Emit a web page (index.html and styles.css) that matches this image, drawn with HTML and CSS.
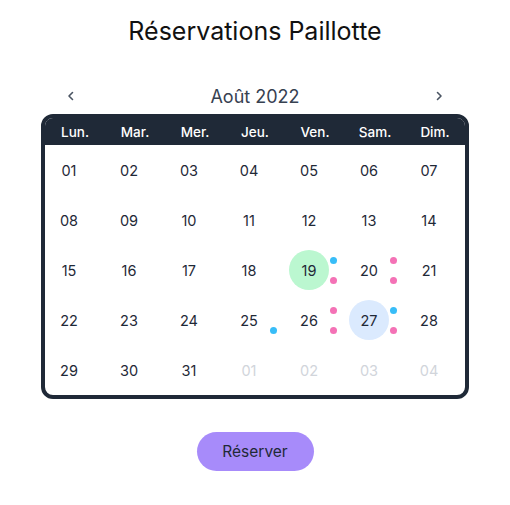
FILE: index.html
```html
<!DOCTYPE html>
<html lang="fr">
<head>
    <meta charset="UTF-8" />
    <meta name="viewport" content="width=device-width, initial-scale=1.0" />
    <title>Réservations Paillotte</title>
    <link rel="stylesheet" href="styles.css">
</head>
<body>
    <h1>Réservations Paillotte</h1>

    <div class="calendar-wrap">
        <div class="month-nav">
            <button class="nav-btn" aria-label="Mois précédent">
                <svg width="10" height="10" viewBox="0 0 10 10"><path d="M6.5 1.5 L3 5 L6.5 8.5" fill="none" stroke="#4b5563" stroke-width="1.6" stroke-linecap="round" stroke-linejoin="round"/></svg>
            </button>
            <span class="month-label">Août 2022</span>
            <button class="nav-btn" aria-label="Mois suivant">
                <svg width="10" height="10" viewBox="0 0 10 10"><path d="M3.5 1.5 L7 5 L3.5 8.5" fill="none" stroke="#4b5563" stroke-width="1.6" stroke-linecap="round" stroke-linejoin="round"/></svg>
            </button>
        </div>

        <div class="calendar">
            <div class="weekdays">
                <span>Lun.</span><span>Mar.</span><span>Mer.</span><span>Jeu.</span><span>Ven.</span><span>Sam.</span><span>Dim.</span>
            </div>
            <div class="days">
                <div class="day"><span class="num">01</span><span class="dots"></span></div>
                <div class="day"><span class="num">02</span><span class="dots"></span></div>
                <div class="day"><span class="num">03</span><span class="dots"></span></div>
                <div class="day"><span class="num">04</span><span class="dots"></span></div>
                <div class="day"><span class="num">05</span><span class="dots"></span></div>
                <div class="day"><span class="num">06</span><span class="dots"></span></div>
                <div class="day"><span class="num">07</span><span class="dots"></span></div>

                <div class="day"><span class="num">08</span><span class="dots"></span></div>
                <div class="day"><span class="num">09</span><span class="dots"></span></div>
                <div class="day"><span class="num">10</span><span class="dots"></span></div>
                <div class="day"><span class="num">11</span><span class="dots"></span></div>
                <div class="day"><span class="num">12</span><span class="dots"></span></div>
                <div class="day"><span class="num">13</span><span class="dots"></span></div>
                <div class="day"><span class="num">14</span><span class="dots"></span></div>

                <div class="day"><span class="num">15</span><span class="dots"></span></div>
                <div class="day"><span class="num">16</span><span class="dots"></span></div>
                <div class="day"><span class="num">17</span><span class="dots"></span></div>
                <div class="day"><span class="num">18</span><span class="dots"></span></div>
                <div class="day"><span class="num today">19</span><span class="dots"><i class="dot blue"></i><i class="dot pink"></i></span></div>
                <div class="day"><span class="num">20</span><span class="dots"><i class="dot pink"></i><i class="dot pink"></i></span></div>
                <div class="day"><span class="num">21</span><span class="dots"></span></div>

                <div class="day"><span class="num">22</span><span class="dots"></span></div>
                <div class="day"><span class="num">23</span><span class="dots"></span></div>
                <div class="day"><span class="num">24</span><span class="dots"></span></div>
                <div class="day"><span class="num">25</span><span class="dots"><i class="dot empty"></i><i class="dot blue"></i></span></div>
                <div class="day"><span class="num">26</span><span class="dots"><i class="dot pink"></i><i class="dot pink"></i></span></div>
                <div class="day"><span class="num selected">27</span><span class="dots"><i class="dot blue"></i><i class="dot pink"></i></span></div>
                <div class="day"><span class="num">28</span><span class="dots"></span></div>

                <div class="day"><span class="num">29</span><span class="dots"></span></div>
                <div class="day"><span class="num">30</span><span class="dots"></span></div>
                <div class="day"><span class="num">31</span><span class="dots"></span></div>
                <div class="day other"><span class="num">01</span><span class="dots"></span></div>
                <div class="day other"><span class="num">02</span><span class="dots"></span></div>
                <div class="day other"><span class="num">03</span><span class="dots"></span></div>
                <div class="day other"><span class="num">04</span><span class="dots"></span></div>
            </div>
        </div>
    </div>

    <div class="actions">
        <button class="reserve-btn">Réserver</button>
    </div>
</body>
</html>
```

FILE: styles.css
```css
body {
    margin: 0;
    font-family: "Inter", "Noto Sans", sans-serif;
    background-color: #ffffff;
    color: #1f2937;
}

h1 {
    margin: 15px 0 0;
    font-size: 25px;
    line-height: 32px;
    font-weight: 400;
    text-align: center;
    color: #111111;
}

.calendar-wrap {
    width: 428px;
    margin: 37px auto 0;
}

/* Navigation du mois */
.month-nav {
    display: flex;
    align-items: center;
    justify-content: space-between;
    height: 24px;
    padding: 0 24px;
}

.month-label {
    font-size: 18px;
    color: #374151;
}

.nav-btn {
    display: flex;
    align-items: center;
    justify-content: center;
    width: 12px;
    height: 12px;
    padding: 0;
    border: none;
    background: none;
    cursor: pointer;
}

/* Calendrier */
.calendar {
    margin-top: 6px;
    border: 4px solid #1f2937;
    border-radius: 12px;
    overflow: hidden;
    background-color: #ffffff;
}

.weekdays {
    display: grid;
    grid-template-columns: repeat(7, 1fr);
    height: 27px;
    align-items: center;
    background-color: #1f2937;
    color: #ffffff;
    font-size: 13.5px;
    font-weight: 500;
    text-align: center;
}

.days {
    display: grid;
    grid-template-columns: repeat(7, 1fr);
    grid-auto-rows: 50px;
}

.day {
    display: flex;
    align-items: center;
    justify-content: center;
}

.num {
    display: flex;
    align-items: center;
    justify-content: center;
    width: 40px;
    height: 40px;
    border-radius: 50%;
    font-size: 14.5px;
    color: #1f2937;
}

.num.today {
    background-color: #bbf7d0;
}

.num.selected {
    background-color: #dbeafe;
}

.day.other .num {
    color: #d1d5db;
}

.dots {
    display: flex;
    flex-direction: column;
    justify-content: center;
    gap: 13px;
    width: 12px;
    height: 40px;
    padding-left: 1px;
    box-sizing: border-box;
}

.dot {
    display: block;
    width: 7px;
    height: 7px;
    border-radius: 50%;
}

.dot.blue {
    background-color: #38bdf8;
}

.dot.pink {
    background-color: #f472b6;
}

.dot.empty {
    background: none;
}

/* Bouton réserver */
.actions {
    display: flex;
    justify-content: center;
    margin-top: 33px;
}

.reserve-btn {
    width: 117px;
    height: 39px;
    border: none;
    border-radius: 20px;
    background-color: #a78bfa;
    color: #1f2937;
    font-family: inherit;
    font-size: 15.5px;
    cursor: pointer;
}
```
